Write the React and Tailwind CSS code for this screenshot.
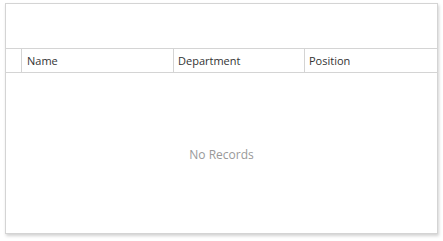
export default function App() {
  const font = { fontFamily: '"Segoe UI", "Open Sans", "Noto Sans", sans-serif' };
  return (
    <div className="w-[443px] h-[241px] bg-white pt-[3px] pl-[5px]" style={font}>
      <div className="w-[433px] h-[231px] border border-[#d4d4d4] bg-white shadow-[1px_2px_3px_rgba(0,0,0,0.18)] flex flex-col">
        {/* toolbar area */}
        <div className="h-[44px]" />
        {/* header */}
        <div className="h-[25px] border-y border-[#d4d4d4] flex text-[11px] text-[#333]">
          <div className="w-[16px] border-r border-[#d4d4d4]" />
          <div className="w-[152px] border-r border-[#d4d4d4] pl-[5px] pt-[1px] flex items-center">Name</div>
          <div className="w-[131px] border-r border-[#d4d4d4] pl-[4px] pt-[1px] flex items-center">Department</div>
          <div className="flex-1 pl-[4px] pt-[1px] flex items-center">Position</div>
        </div>
        {/* body */}
        <div className="flex-1 flex items-center justify-center text-[12px] text-[#999] pt-[4px]">
          No Records
        </div>
      </div>
    </div>
  );
}
